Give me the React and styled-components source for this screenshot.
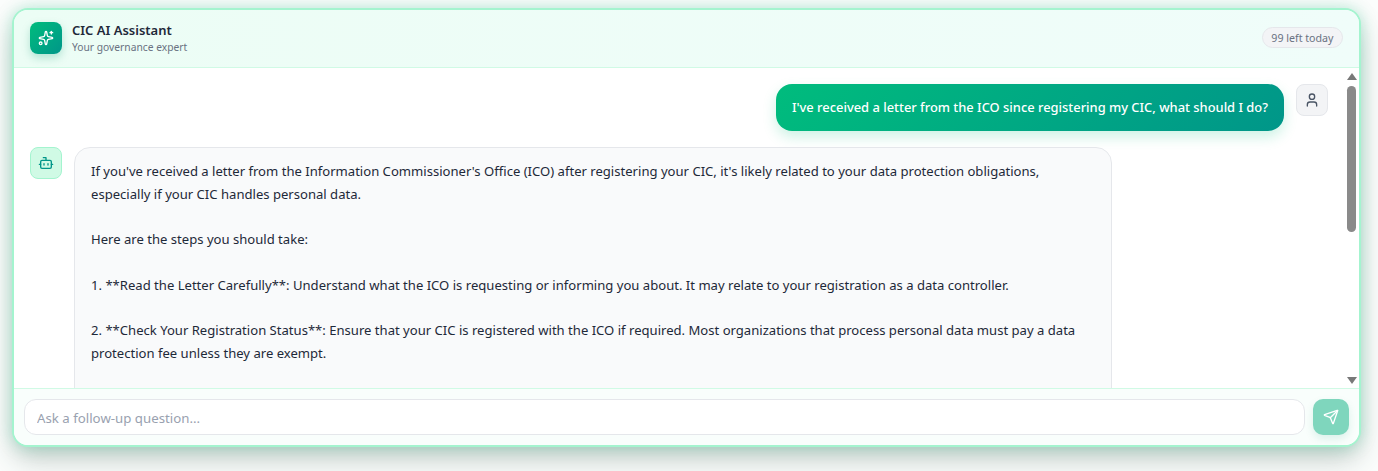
import React from 'react';
import styled, { createGlobalStyle } from 'styled-components';
import { Sparkles, Bot, User, Send } from 'lucide-react';

const GlobalStyle = createGlobalStyle`
  html, body {
    margin: 0;
    padding: 0;
    height: 100%;
    background: #fbfdfc;
    font-family: "Noto Sans", "Open Sans", sans-serif;
  }
  * { box-sizing: border-box; }
`;

const Page = styled.div`
  width: 1378px;
  height: 471px;
  padding: 8px 17px 24px 12px;
  overflow: hidden;
`;

const Card = styled.div`
  height: 439px;
  display: flex;
  flex-direction: column;
  background: #fff;
  border: 2px solid #a4f4cf;
  border-radius: 16px;
  overflow: hidden;
  box-shadow: 0 0 16px rgba(0, 188, 125, 0.26), 0 14px 28px -2px rgba(30, 60, 50, 0.26);
`;

const Header = styled.header`
  height: 58px;
  flex: none;
  display: flex;
  align-items: center;
  justify-content: space-between;
  padding: 0 16px 2px;
  background: linear-gradient(90deg, #ecfdf5, #f0fdfa);
  border-bottom: 1px solid #d0fae5;
`;

const Brand = styled.div`
  display: flex;
  align-items: center;
  gap: 10px;
`;

const LogoTile = styled.div`
  width: 32px;
  height: 32px;
  border-radius: 8px;
  display: flex;
  align-items: center;
  justify-content: center;
  color: #fff;
  background: linear-gradient(135deg, #00bc7d, #009689);
  box-shadow: 0 4px 8px rgba(0, 150, 110, 0.25);
`;

const Title = styled.div`
  font-size: 13px;
  line-height: 19px;
  font-weight: 600;
  color: #1e2939;
`;

const Subtitle = styled.div`
  font-size: 10.27px;
  line-height: 15px;
  color: #6a7282;
`;

const Quota = styled.span`
  height: 21px;
  padding: 0 8.5px;
  display: flex;
  align-items: center;
  font-size: 10.65px;
  color: #6a7282;
  background: #f3f4f6;
  border: 1px solid #e5e7eb;
  border-radius: 999px;
`;

const Body = styled.div`
  flex: 1;
  min-height: 0;
  display: flex;
`;

const Messages = styled.div`
  flex: 1;
  min-width: 0;
  padding: 16px 16px 16px 16px;
  display: flex;
  flex-direction: column;
  gap: 16px;
  overflow: hidden;
`;

const ScrollRail = styled.div`
  width: 15px;
  flex: none;
  padding: 5px 0 4px;
  display: flex;
  flex-direction: column;
  align-items: center;
  background: #fff;
`;

const ScrollArrow = styled.div`
  width: 0;
  height: 0;
  flex: none;
  border-left: 5px solid transparent;
  border-right: 5px solid transparent;
  ${p => (p.$down ? 'border-top: 7px solid #787878;' : 'border-bottom: 7px solid #787878;')}
`;

const ScrollThumb = styled.div`
  width: 9px;
  height: 146px;
  margin-top: 6px;
  background: #8a8a8a;
  border-radius: 5px;
`;

const RailGap = styled.div`
  flex: 1;
`;

const Row = styled.div`
  display: flex;
  flex: none;
  gap: 12px;
  align-items: flex-start;
  justify-content: ${p => (p.$mine ? 'flex-end' : 'flex-start')};
`;

const Avatar = styled.div`
  width: 32px;
  height: 32px;
  flex: none;
  border-radius: 8px;
  display: flex;
  align-items: center;
  justify-content: center;
  color: ${p => (p.$bot ? '#009689' : '#4a5565')};
  background: ${p => (p.$bot ? '#d0fae5' : '#f3f4f6')};
  border: 1px solid ${p => (p.$bot ? '#a4f4cf' : '#e5e7eb')};
`;

const UserBubble = styled.div`
  padding: 13px 16px;
  font-size: 12.9px;
  line-height: 21px;
  font-weight: 500;
  color: #fff;
  border-radius: 16px;
  background: linear-gradient(135deg, #00bc7d, #009689);
  box-shadow: 0 6px 14px rgba(0, 188, 125, 0.2);
`;

const BotBubble = styled.div`
  width: 1038px;
  min-height: 300px;
  padding: 12px 16px;
  font-size: 13.08px;
  line-height: 22.75px;
  color: #1e2939;
  background: #f9fafb;
  border: 1px solid #e5e7eb;
  border-radius: 16px;
`;

const Paragraph = styled.p`
  margin: 0 0 22.75px;
`;

const Composer = styled.form`
  flex: none;
  display: flex;
  align-items: center;
  gap: 8px;
  height: 57px;
  padding: 0 10px;
  background: #f9fefc;
  border-top: 1px solid #d0fae5;
`;

const Input = styled.input`
  flex: 1;
  height: 36px;
  padding: 1px 12px 0;
  font: 13.25px "Noto Sans", "Open Sans", sans-serif;
  background: #fff;
  border: 1px solid #e5e7eb;
  border-radius: 12px;
  outline: none;

  &::placeholder { color: #99a1af; opacity: 1; }
`;

const SendButton = styled.button`
  width: 36px;
  height: 36px;
  flex: none;
  padding: 0;
  display: flex;
  align-items: center;
  justify-content: center;
  color: #fff;
  background: #7fd6bd;
  border: 0;
  border-radius: 10px;
  box-shadow: 0 4px 8px rgba(0, 150, 110, 0.12);
`;

const answer = [
  "If you've received a letter from the Information Commissioner's Office (ICO) after registering your CIC, it's likely related to your data protection obligations, especially if your CIC handles personal data.",
  'Here are the steps you should take:',
  '1. **Read the Letter Carefully**: Understand what the ICO is requesting or informing you about. It may relate to your registration as a data controller.',
  '2. **Check Your Registration Status**: Ensure that your CIC is registered with the ICO if required. Most organizations that process personal data must pay a data protection fee unless they are exempt.',
];

export default function App() {
  return (
    <Page>
      <GlobalStyle />
      <Card>
        <Header>
          <Brand>
            <LogoTile><Sparkles size={16} strokeWidth={2} /></LogoTile>
            <div>
              <Title>CIC AI Assistant</Title>
              <Subtitle>Your governance expert</Subtitle>
            </div>
          </Brand>
          <Quota>99 left today</Quota>
        </Header>
        <Body>
          <Messages>
            <Row $mine>
              <UserBubble>I've received a letter from the ICO since registering my CIC, what should I do?</UserBubble>
              <Avatar><User size={16} strokeWidth={2} /></Avatar>
            </Row>
            <Row>
              <Avatar $bot><Bot size={16} strokeWidth={2} /></Avatar>
              <BotBubble>
                {answer.map((text, i) => <Paragraph key={i}>{text}</Paragraph>)}
              </BotBubble>
            </Row>
          </Messages>
          <ScrollRail>
            <ScrollArrow />
            <ScrollThumb />
            <RailGap />
            <ScrollArrow $down />
          </ScrollRail>
        </Body>
        <Composer onSubmit={e => e.preventDefault()}>
          <Input placeholder="Ask a follow-up question..." />
          <SendButton type="button" aria-label="Send"><Send size={16} strokeWidth={2} /></SendButton>
        </Composer>
      </Card>
    </Page>
  );
}
